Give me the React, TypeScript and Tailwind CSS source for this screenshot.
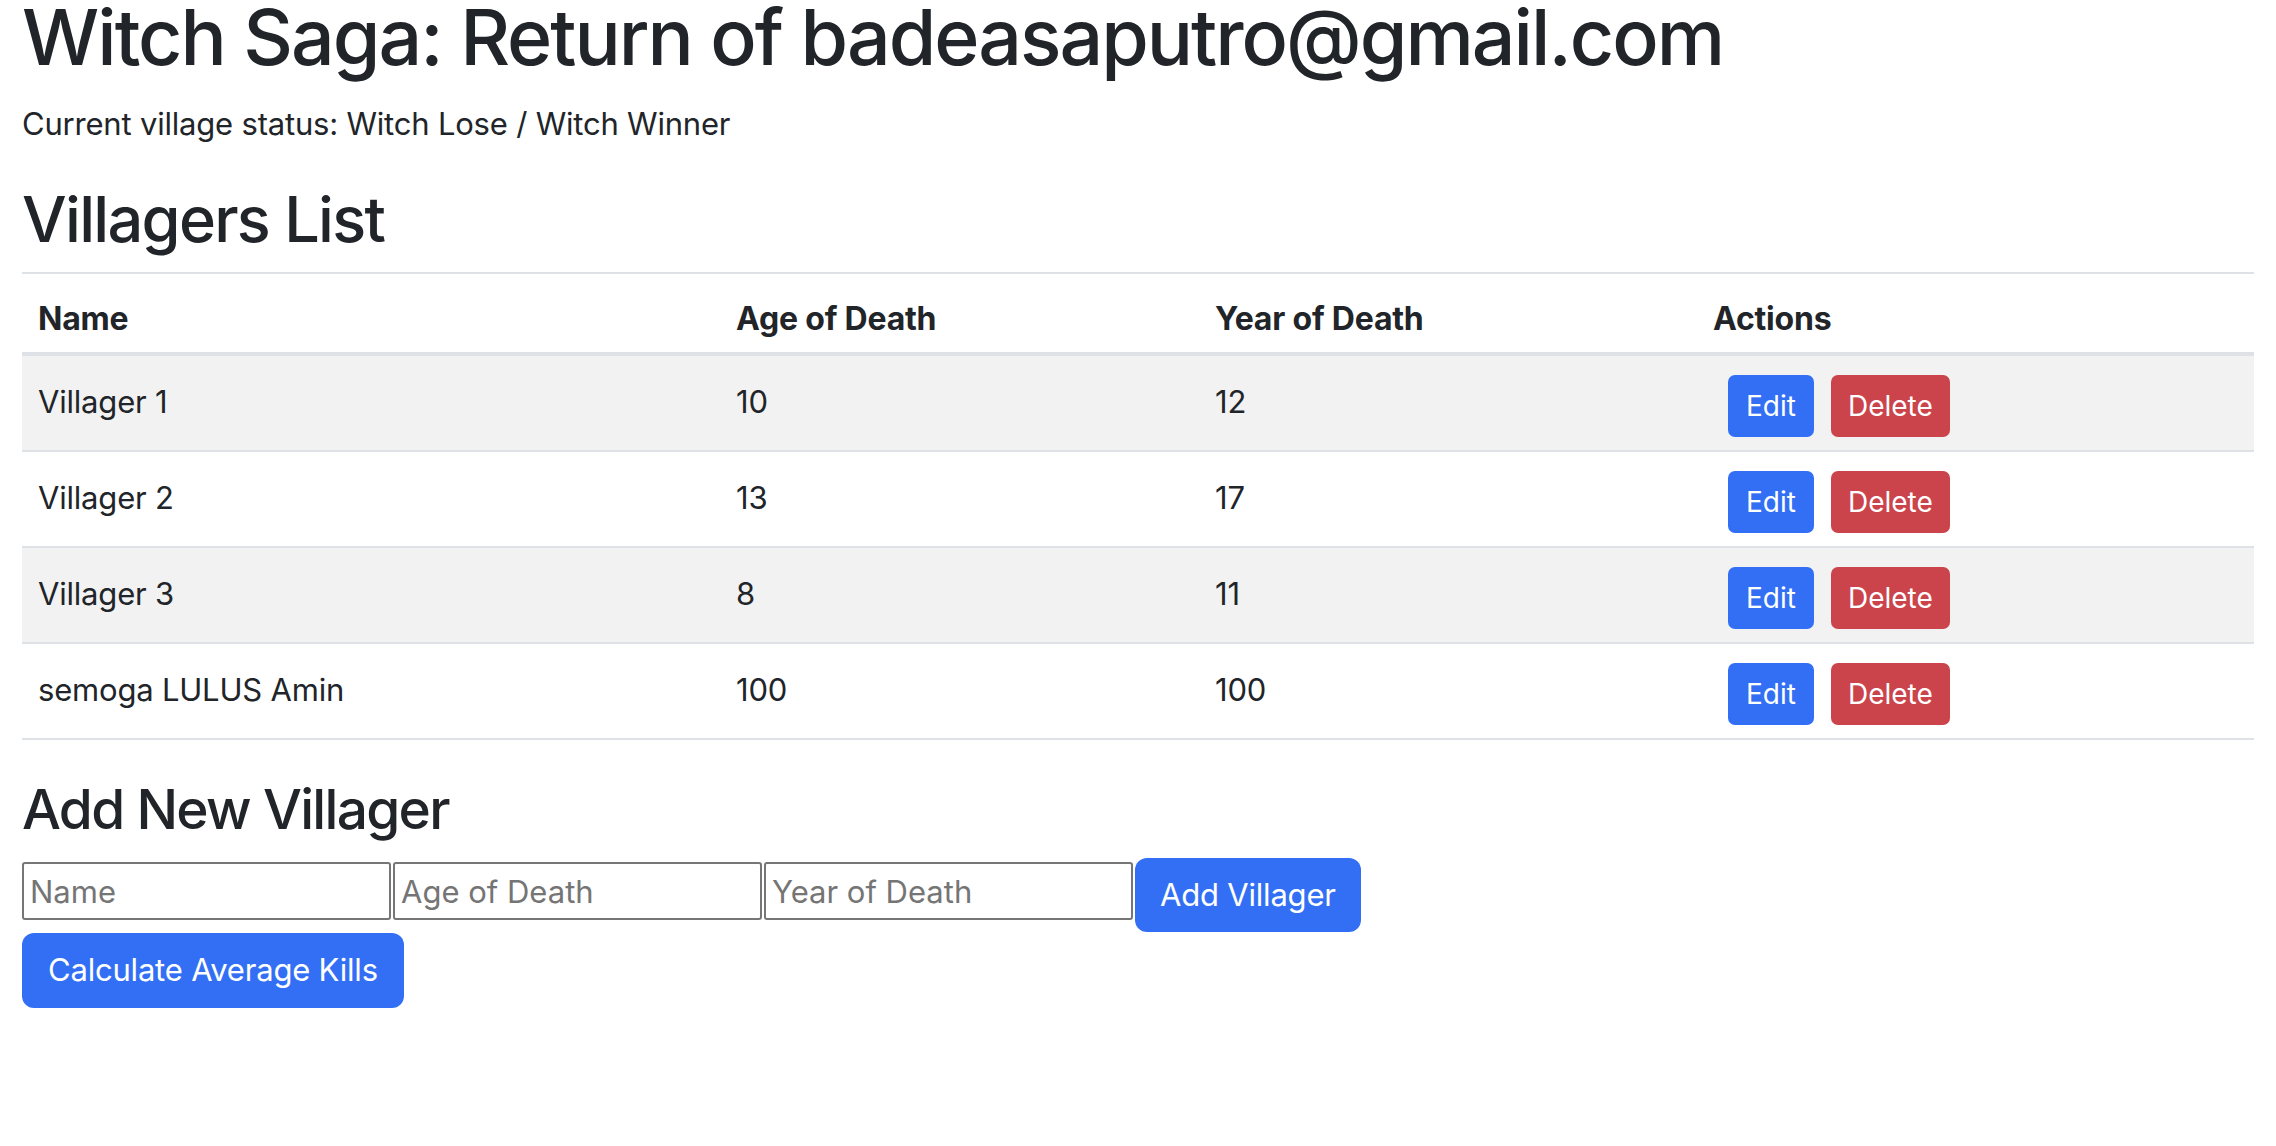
import React from 'react';

const villagers = [
  { id: 1, name: 'Villager 1', age: 10, year: 12 },
  { id: 2, name: 'Villager 2', age: 13, year: 17 },
  { id: 3, name: 'Villager 3', age: 8, year: 11 },
  { id: 4, name: 'semoga LULUS Amin', age: 100, year: 100 },
];

const App = () => {
  return (
    <div className="min-h-screen bg-white px-[22px] text-[#212529] font-['Inter',sans-serif]">
      <h1 className="text-[77px] leading-[74px] font-medium tracking-[-2px] mb-[26px]">
        Witch Saga: Return of badeasaputro@gmail.com
      </h1>
      <p className="text-[31px] leading-[48px] tracking-[-0.2px] mb-[33px]">
        Current village status: Witch Lose / Witch Winner
      </p>

      <h2 className="text-[63px] leading-[76px] font-medium tracking-[-1.7px] mb-[15px]">Villagers List</h2>

      <table className="w-full table-fixed border-collapse text-[31px] leading-[48px] tracking-[-0.2px] mb-[36px]">
        <colgroup>
          <col className="w-[698px]" />
          <col className="w-[479px]" />
          <col className="w-[498px]" />
          <col />
        </colgroup>
        <thead>
          <tr className="border-t-2 border-b-4 border-[#dee2e6]">
            <th className="text-left text-[32px] font-bold px-[16px] pt-[21px] pb-[9px]">Name</th>
            <th className="text-left text-[32px] font-bold px-[16px] pt-[21px] pb-[9px]">Age of Death</th>
            <th className="text-left text-[32px] font-bold px-[16px] pt-[21px] pb-[9px]">Year of Death</th>
            <th className="text-left text-[32px] font-bold px-[16px] pt-[21px] pb-[9px]">Actions</th>
          </tr>
        </thead>
        <tbody>
          {villagers.map((v, i) => (
            <tr
              key={v.id}
              className={`border-b-2 border-[#dee2e6] ${i % 2 === 0 ? 'bg-[#f2f2f2]' : 'bg-white'}`}
            >
              <td className="align-top px-[16px] pt-[22px]">{v.name}</td>
              <td className="align-top px-[16px] pt-[22px]">{v.age}</td>
              <td className="align-top px-[16px] pt-[22px]">{v.year}</td>
              <td className="align-top px-[16px] pt-[19px] pb-[13px]">
                <div className="flex gap-[17px] ml-[15px]">
                  <button className="h-[62px] px-[18px] rounded-[7px] bg-[#336ff5] text-white text-[28px] leading-[42px] tracking-normal">
                    Edit
                  </button>
                  <button className="h-[62px] px-[17px] rounded-[7px] bg-[#cb444b] text-white text-[28px] leading-[42px] tracking-normal">
                    Delete
                  </button>
                </div>
              </td>
            </tr>
          ))}
        </tbody>
      </table>

      <h3 className="text-[55px] leading-[66px] font-medium tracking-[-1.7px] mb-[16px]">Add New Villager</h3>

      <div className="flex items-start gap-[2px]">
        <input
          placeholder="Name"
          className="mt-[4px] w-[369px] h-[58px] border-2 border-[#767676] rounded-[3px] px-[6px] text-[31px] placeholder:text-[#757575] outline-none"
        />
        <input
          placeholder="Age of Death"
          className="mt-[4px] w-[369px] h-[58px] border-2 border-[#767676] rounded-[3px] px-[6px] text-[31px] placeholder:text-[#757575] outline-none"
        />
        <input
          placeholder="Year of Death"
          className="mt-[4px] w-[369px] h-[58px] border-2 border-[#767676] rounded-[3px] px-[6px] text-[31px] placeholder:text-[#757575] outline-none"
        />
        <button className="h-[74px] px-[25px] rounded-[12px] bg-[#336ff5] text-white text-[31px] tracking-[-0.2px]">
          Add Villager
        </button>
      </div>
      <button className="mt-[1px] h-[75px] px-[26px] rounded-[12px] bg-[#336ff5] text-white text-[31px] tracking-[-0.2px]">
        Calculate Average Kills
      </button>
    </div>
  );
};

export default App;
